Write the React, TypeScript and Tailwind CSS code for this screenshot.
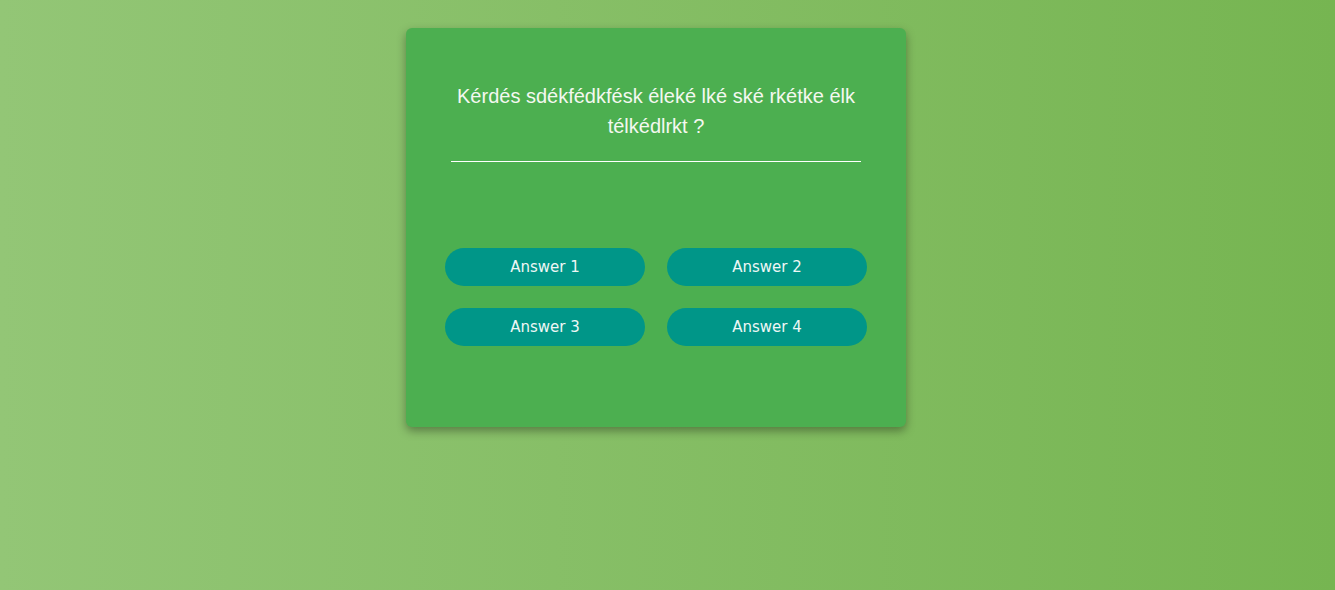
import React from 'react';

const answers = ['Answer 1', 'Answer 2', 'Answer 3', 'Answer 4'];

export default function App() {
  return (
    <div className="min-h-screen w-full bg-gradient-to-r from-[#93c676] to-[#76b551] flex justify-center pr-[23px] pt-[28px]">
      {/* Question card */}
      <div className="w-[500px] h-[399px] bg-[#4caf50] rounded-md shadow-[0_4px_10px_rgba(0,0,0,0.35)] px-[45px] pt-[53px]">
        <h1 className="text-[20px] leading-[30px] text-center text-[#f4f8f0] font-['Liberation_Sans',Arial,sans-serif]">
          Kérdés sdékfédkfésk éleké lké ské rkétke élk télkédlrkt ?
        </h1>
        <hr className="mt-[20px] border-0 border-t border-white" />
        <div className="mt-[86px] -mx-[6px] grid grid-cols-2 gap-x-[22px] gap-y-[22px]">
          {answers.map((a) => (
            <button
              key={a}
              className="h-[38px] rounded-full bg-[#009688] text-[#eef7f5] text-[15px] font-['DejaVu_Sans',sans-serif]"
            >
              {a}
            </button>
          ))}
        </div>
      </div>
    </div>
  );
}
